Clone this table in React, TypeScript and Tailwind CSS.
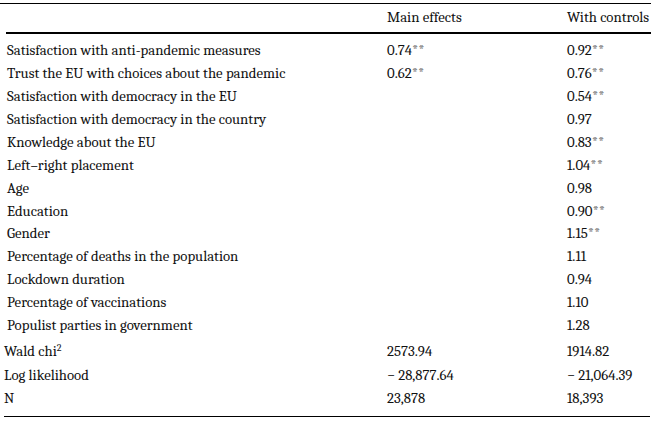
const rows: [string, string, string][] = [
  ["Satisfaction with anti-pandemic measures", "0.74**", "0.92**"],
  ["Trust the EU with choices about the pandemic", "0.62**", "0.76**"],
  ["Satisfaction with democracy in the EU", "", "0.54**"],
  ["Satisfaction with democracy in the country", "", "0.97"],
  ["Knowledge about the EU", "", "0.83**"],
  ["Left–right placement", "", "1.04**"],
  ["Age", "", "0.98"],
  ["Education", "", "0.90**"],
  ["Gender", "", "1.15**"],
  ["Percentage of deaths in the population", "", "1.11"],
  ["Lockdown duration", "", "0.94"],
  ["Percentage of vaccinations", "", "1.10"],
  ["Populist parties in government", "", "1.28"],
];

const Value = ({ v }: { v: string }) => {
  if (!v.endsWith("**")) return <span>{v}</span>;
  return (
    <span>
      {v.slice(0, -2)}
      <span className="text-[#7a7a7a]">**</span>
    </span>
  );
};

export default function App() {
  return (
    <div className="w-[661px] h-[425px] bg-white text-[#111] font-serif text-[14.8px] pt-[3px]">
      <div className="w-[651px] border-t border-black">
        <div className="grid grid-cols-[387px_180px_1fr] h-[28px] items-center">
          <div />
          <div>Main effects</div>
          <div>With controls</div>
        </div>
      </div>
      <div className="ml-[6px] w-[645px] h-[2px] bg-black" />
      <div className="pt-[6px]">
        {rows.map(([label, a, b]) => (
          <div key={label} className="grid grid-cols-[387px_180px_1fr] h-[22.9px] items-center">
            <div className="pl-[7px]">{label}</div>
            <div><Value v={a} /></div>
            <div><Value v={b} /></div>
          </div>
        ))}
      </div>
      <div className="pt-[3px]">
        <div className="grid grid-cols-[387px_180px_1fr] h-[24px] items-center">
          <div className="pl-[4px]">
            Wald chi<sup className="text-[10px]">2</sup>
          </div>
          <div>2573.94</div>
          <div>1914.82</div>
        </div>
        <div className="grid grid-cols-[387px_180px_1fr] h-[23px] items-center">
          <div className="pl-[4px]">Log likelihood</div>
          <div>−&#8201;28,877.64</div>
          <div>−&#8201;21,064.39</div>
        </div>
        <div className="grid grid-cols-[387px_180px_1fr] h-[22px] items-center">
          <div className="pl-[4px]">N</div>
          <div>23,878</div>
          <div>18,393</div>
        </div>
      </div>
      <div className="ml-[4px] mt-[6px] w-[646px] h-px bg-black" />
    </div>
  );
}
